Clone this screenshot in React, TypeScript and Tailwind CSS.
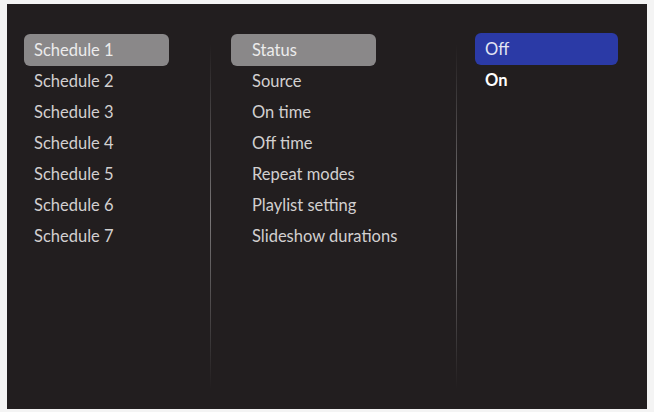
import React from "react";

const SCHEDULES = ["Schedule 1", "Schedule 2", "Schedule 3", "Schedule 4", "Schedule 5", "Schedule 6", "Schedule 7"];
const SETTINGS = ["Status", "Source", "On time", "Off time", "Repeat modes", "Playlist setting", "Slideshow durations"];

function Divider() {
    return (
        <div className="w-px shrink-0 mt-[40px] mb-[20px] bg-gradient-to-b from-transparent via-[#7a7778] to-transparent" />
    );
}

export default function App() {
    return (
        <div
            className="w-[654px] h-[412px] bg-[#f4f4f4] pl-[7px] pt-[4px]"
            style={{ fontFamily: "Lato, 'Open Sans', sans-serif" }}
        >
            <div className="w-[640px] h-[405px] bg-[#221e1f] flex text-[16.5px] text-[#d2d0d0] whitespace-nowrap">
                {/* Schedules */}
                <div className="w-[203px] shrink-0 pl-[17px] pt-[30px] flex flex-col">
                    {SCHEDULES.map((s, i) => (
                        <div
                            key={s}
                            className={`w-[145px] h-[31px] pl-[10px] flex items-center rounded-[6px] ${i === 0 ? "bg-[#8a8889] text-[#ececec] h-[32px]" : ""}`}
                        >
                            {s}
                        </div>
                    ))}
                </div>

                <Divider />

                {/* Settings */}
                <div className="w-[245px] shrink-0 pl-[20px] pt-[30px] flex flex-col">
                    {SETTINGS.map((s, i) => (
                        <div
                            key={s}
                            className={`w-[145px] h-[31px] pl-[21px] flex items-center rounded-[6px] ${i === 0 ? "bg-[#8a8889] text-[#ececec] h-[32px]" : ""}`}
                        >
                            {s}
                        </div>
                    ))}
                </div>

                <Divider />

                {/* Values */}
                <div className="flex-1 pl-[18px] pt-[29px] flex flex-col">
                    <div className="w-[143px] h-[32px] pl-[10px] flex items-center rounded-[6px] bg-[#2b3aa6] text-[#e4e6f4]">
                        Off
                    </div>
                    <div className="h-[31px] pl-[10px] flex items-center font-bold text-white">On</div>
                </div>
            </div>
        </div>
    );
}
